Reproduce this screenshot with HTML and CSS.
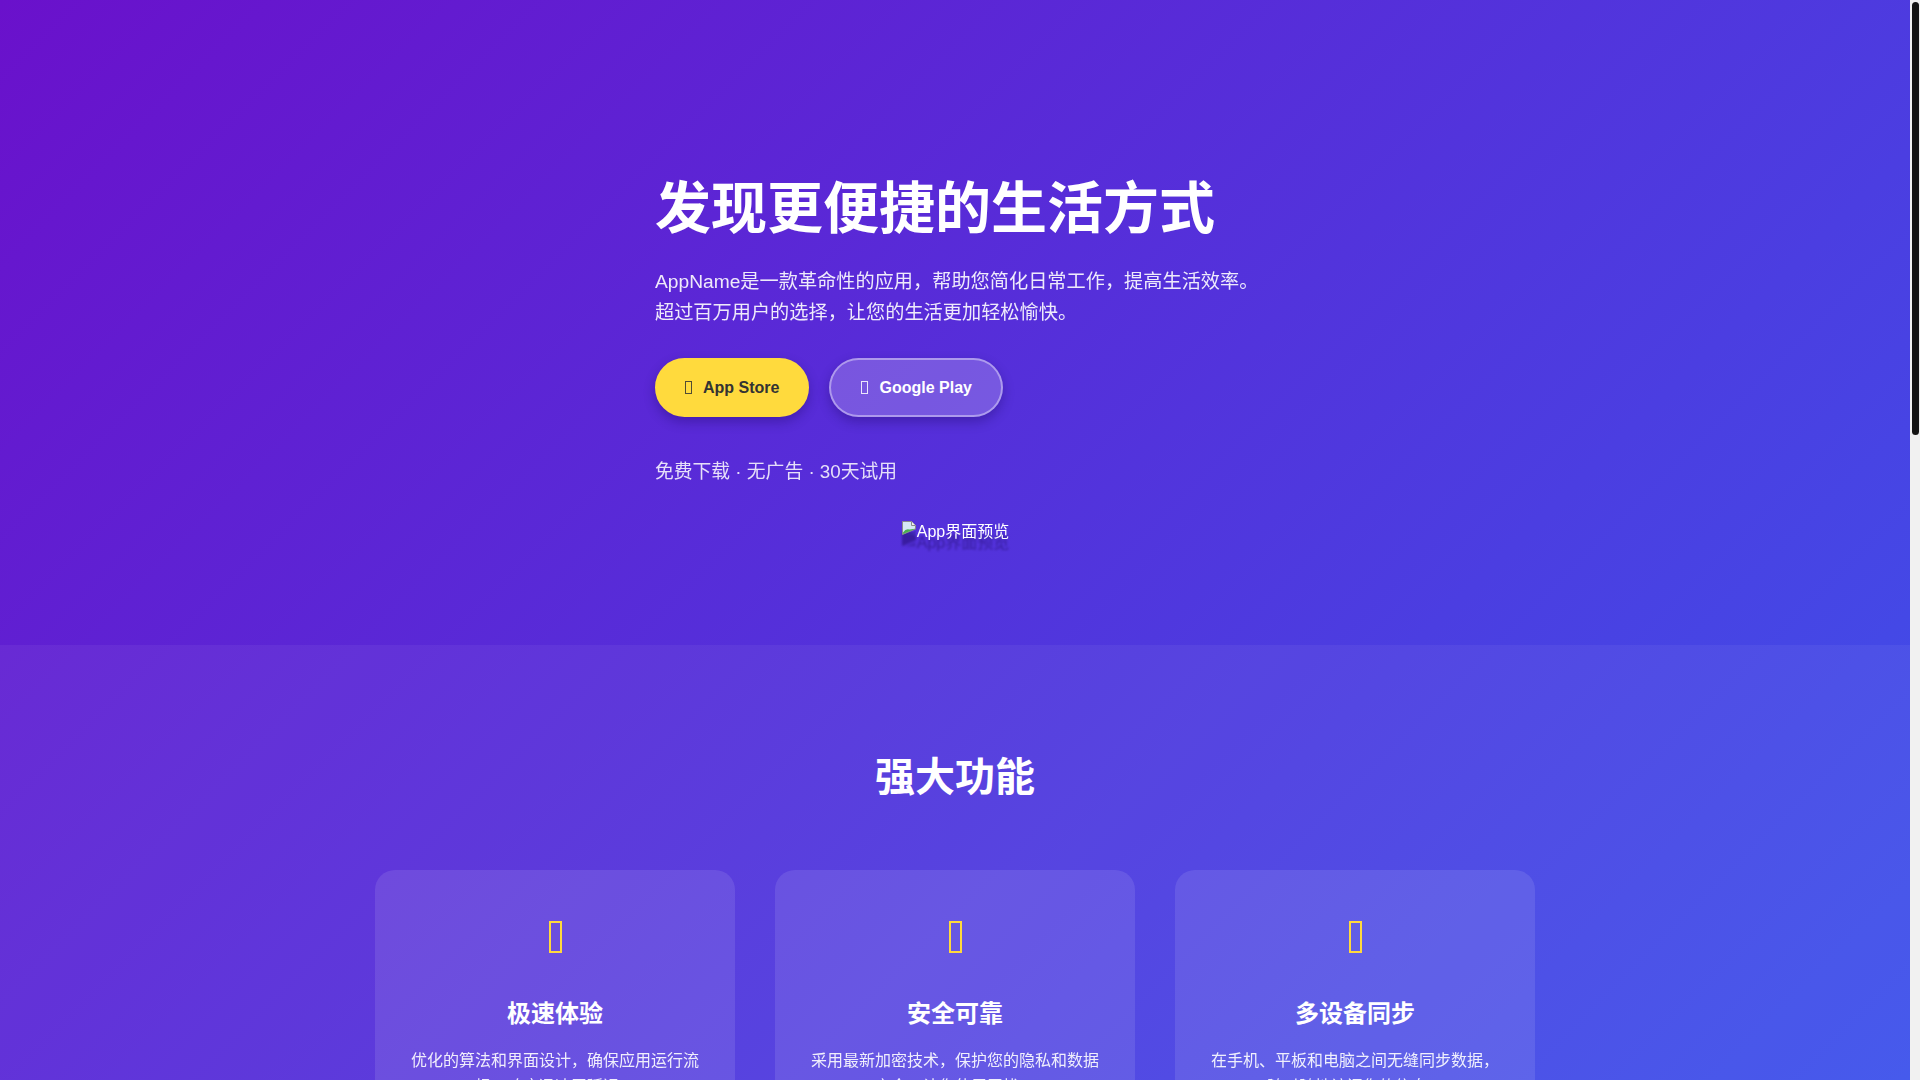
FILE: index.html
```html
<!DOCTYPE html>
<html lang="zh-CN">
<head>
<meta charset="utf-8">
<title>AppName - 发现更便捷的生活方式</title>
<link rel="stylesheet" href="styles.css">
</head>
<body>
<div class="site">
<section class="hero">
  <div class="hero-content">
    <h1 class="hero-title">发现更便捷的生活方式</h1>
    <p class="hero-lead">AppName是一款革命性的应用，帮助您简化日常工作，提高生活效率。超过百万用户的选择，让您的生活更加轻松愉快。</p>
    <div class="hero-buttons">
      <a class="btn btn-primary" href="#"><span class="tofu"></span>App Store</a>
      <a class="btn btn-secondary" href="#"><span class="tofu"></span>Google Play</a>
    </div>
    <p class="hero-note">免费下载 · 无广告 · 30天试用</p>
  </div>
  <div class="hero-preview">
    <svg class="broken-icon" width="16" height="16" viewBox="0 0 16 16" aria-hidden="true">
      <path d="M1.5 1.5H10.5L14.5 5.5V9L1.5 14.5Z" fill="#d6e6f5" stroke="#8a8a8a" stroke-width="1"/>
      <path d="M2 12.5Q5 8 8.5 9.5L14 8.7V9L2 14Z" fill="#4caf50"/>
      <path d="M10.5 1.5V5.5H14.5" fill="#eeeeee" stroke="#8a8a8a" stroke-width="1"/>
      <path d="M3 16L14.5 11V15.5H3Z" fill="#3b2aa8" opacity="0.6"/>
    </svg>
    <span class="preview-alt">App界面预览</span>
  </div>
</section>

<section class="features">
  <h2 class="section-title">强大功能</h2>
  <div class="card-grid">
    <div class="card">
      <div class="card-icon"><span class="tofu tofu-lg"></span></div>
      <h3 class="card-title">极速体验</h3>
      <p class="card-text">优化的算法和界面设计，确保应用运行流畅，响应迅速无延迟。</p>
    </div>
    <div class="card">
      <div class="card-icon"><span class="tofu tofu-lg"></span></div>
      <h3 class="card-title">安全可靠</h3>
      <p class="card-text">采用最新加密技术，保护您的隐私和数据安全，让您使用无忧。</p>
    </div>
    <div class="card">
      <div class="card-icon"><span class="tofu tofu-lg"></span></div>
      <h3 class="card-title">多设备同步</h3>
      <p class="card-text">在手机、平板和电脑之间无缝同步数据，随时随地访问您的信息。</p>
    </div>
    <div class="card">
      <div class="card-icon"><span class="tofu tofu-lg"></span></div>
      <h3 class="card-title">智能提醒</h3>
      <p class="card-text">根据您的习惯智能安排提醒，不再错过任何重要的事情和约会。</p>
    </div>
    <div class="card">
      <div class="card-icon"><span class="tofu tofu-lg"></span></div>
      <h3 class="card-title">数据分析</h3>
      <p class="card-text">直观的图表展示您的使用情况，帮助您更好地了解和规划生活。</p>
    </div>
    <div class="card">
      <div class="card-icon"><span class="tofu tofu-lg"></span></div>
      <h3 class="card-title">个性定制</h3>
      <p class="card-text">丰富的主题和自定义选项，打造属于您自己的专属使用体验。</p>
    </div>
  </div>
</section>

<section class="testimonials">
  <h2 class="section-title">用户评价</h2>
  <div class="card-grid">
    <div class="card quote">
      <p class="card-text">“自从使用了AppName，我的工作效率提高了很多，强烈推荐！”</p>
      <p class="quote-author">— 张先生，产品经理</p>
    </div>
    <div class="card quote">
      <p class="card-text">“界面简洁美观，功能强大，是我每天必用的应用。”</p>
      <p class="quote-author">— 李女士，设计师</p>
    </div>
    <div class="card quote">
      <p class="card-text">“多设备同步非常方便，再也不用担心数据丢失了。”</p>
      <p class="quote-author">— 王同学，大学生</p>
    </div>
  </div>
</section>

<section class="cta">
  <h2 class="section-title">立即开始使用</h2>
  <p class="cta-text">加入超过百万用户的行列，体验更便捷的生活方式。</p>
  <div class="cta-buttons">
    <a class="btn btn-primary" href="#"><span class="tofu"></span>App Store</a>
    <a class="btn btn-secondary" href="#"><span class="tofu"></span>Google Play</a>
  </div>
</section>

<footer class="footer">
  <p>© 2024 AppName. 保留所有权利。</p>
  <p>隐私政策 · 服务条款 · 联系我们</p>
</footer>
</div>
<div class="scrollbar" aria-hidden="true"><div class="scrollbar-thumb"></div></div>
</body>
</html>
```

FILE: styles.css
```css
body {
  margin: 0;
  display: flex;
  align-items: flex-start;
  font-family: "Liberation Sans", "Noto Sans CJK SC", sans-serif;
  color: #ffffff;
  background: #f1f1f1;
}

.site {
  flex: 1;
  min-width: 0;
  background: linear-gradient(135deg, #6a11cb 0%, #2575fc 100%);
}

.scrollbar {
  flex: none;
  position: sticky;
  top: 0;
  width: 10px;
  height: 100vh;
  box-sizing: border-box;
  padding: 2px 1px 0 2px;
  background: #f1f1f1;
}

.scrollbar-thumb {
  height: 433px;
  border-radius: 4px;
  background: #141414;
}

.hero {
  padding: 175px 20px 95px;
}

.hero-content {
  max-width: 600px;
  margin: 0 auto;
}

.hero-title {
  font-size: 3.5rem;
  line-height: 1.2;
  font-weight: 700;
  margin: 0 0 25px;
}

.hero-lead {
  font-size: 1.2rem;
  line-height: 1.6;
  margin: 0 -8px 29px 0;
  opacity: 0.9;
}

.hero-buttons,
.cta-buttons {
  display: flex;
  gap: 20px;
}

.cta-buttons {
  justify-content: center;
}

.btn {
  display: inline-flex;
  align-items: center;
  gap: 11px;
  padding: 17px 28px;
  border: 2px solid transparent;
  border-radius: 50px;
  font-size: 1rem;
  line-height: 21px;
  font-weight: 700;
  text-decoration: none;
  box-shadow: 0 5px 12px rgba(20, 0, 80, 0.3);
}

.btn-primary {
  background: #ffda3d;
  border-color: #ffda3d;
  color: #333333;
}

.btn-secondary {
  padding: 17px 29px 17px 30px;
  background: rgba(255, 255, 255, 0.2);
  border-color: rgba(255, 255, 255, 0.4);
  color: #ffffff;
}

.tofu {
  display: inline-block;
  box-sizing: border-box;
  width: 7px;
  height: 13px;
  border: 1px solid currentColor;
  opacity: 0.85;
}

.hero-note {
  margin: 40px 0 0;
  font-size: 1.175rem;
  line-height: 1.6;
  opacity: 0.85;
}

.hero-preview {
  display: flex;
  justify-content: center;
  align-items: flex-start;
  height: 30px;
  margin-top: 33px;
  filter: drop-shadow(0 11px 1px rgba(25, 5, 90, 0.45));
}

.broken-icon {
  display: block;
  flex: none;
}

.preview-alt {
  font-size: 16px;
  line-height: 24px;
}

.features {
  background: rgba(255, 255, 255, 0.05);
  padding: 108px 20px 100px;
}

.section-title {
  text-align: center;
  font-size: 2.5rem;
  line-height: 1.2;
  font-weight: 700;
  margin: 0 0 69px;
}

.card-grid {
  max-width: 1160px;
  margin: 0 auto;
  display: grid;
  grid-template-columns: repeat(3, 1fr);
  gap: 40px;
}

.card {
  background: rgba(255, 255, 255, 0.1);
  border-radius: 20px;
  padding: 40px 30px;
  text-align: center;
}

.card-icon {
  height: 48px;
  display: flex;
  justify-content: center;
  align-items: flex-start;
  color: #ffd93d;
}

.tofu-lg {
  width: 13px;
  height: 32px;
  margin-top: 11px;
  border-width: 2px;
  opacity: 1;
}

.card-title {
  font-size: 1.5rem;
  line-height: 1.2;
  font-weight: 700;
  margin: 42px 0 20px;
}

.card-text {
  font-size: 1rem;
  line-height: 1.6;
  margin: 0;
  opacity: 0.9;
}

.testimonials {
  padding: 100px 20px;
}

.quote-author {
  margin: 20px 0 0;
  font-weight: 700;
  opacity: 0.85;
}

.cta {
  background: rgba(255, 255, 255, 0.05);
  padding: 120px 20px;
  text-align: center;
}

.cta .section-title {
  margin-bottom: 24px;
}

.cta-text {
  font-size: 1.2rem;
  line-height: 1.6;
  margin: 0 0 32px;
  opacity: 0.9;
}

.footer {
  padding: 60px 20px;
  text-align: center;
  background: rgba(0, 0, 0, 0.15);
  font-size: 0.9rem;
  line-height: 1.6;
  opacity: 0.9;
}

.footer p {
  margin: 10px 0;
}
```
